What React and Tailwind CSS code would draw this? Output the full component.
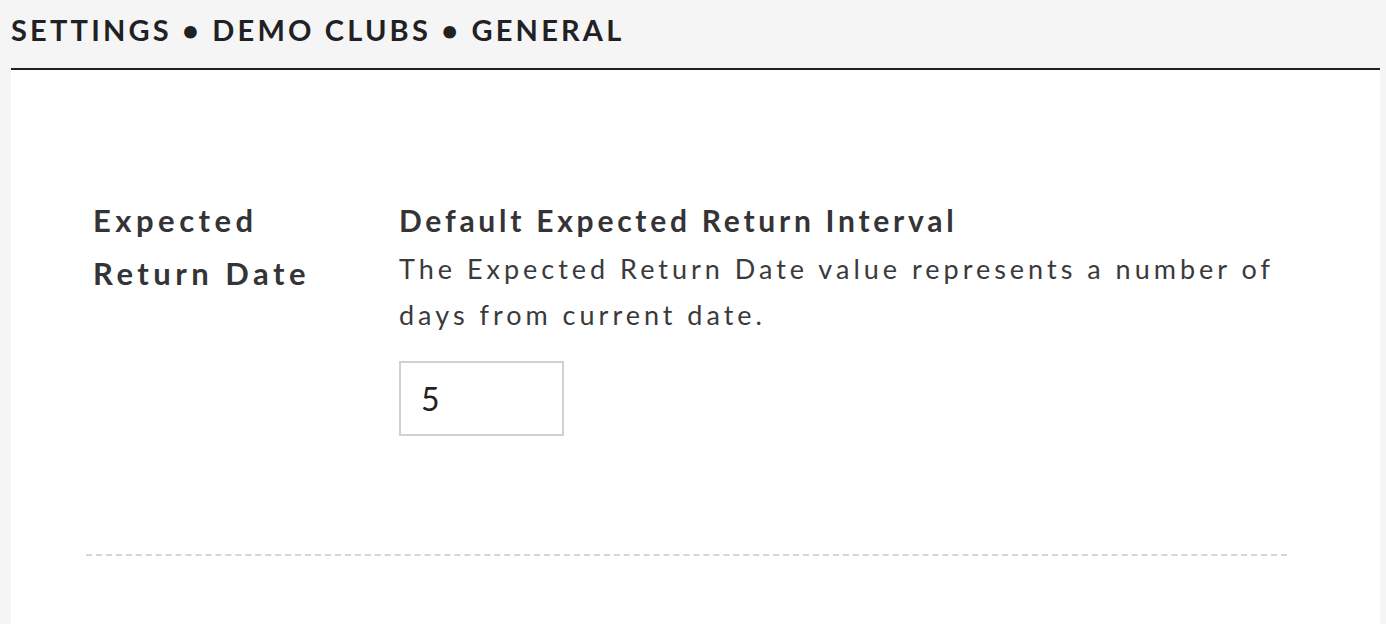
export default function App() {
  return (
    <div className="min-h-screen w-full bg-[#f5f5f5] font-['Lato',sans-serif]" style={{ height: 624 }}>
      <div className="flex h-[68px] items-center pb-[8px] pl-[11px] text-[29px] font-bold uppercase tracking-[0.11em] text-[#1f2124]">
        Settings • Demo Clubs • General
      </div>
      <div className="ml-[11px] mr-[6px] h-[556px] border-t-2 border-[#1f2124] bg-white">
        <div className="ml-[75px] w-[1201px] pt-[124px]">
          <div className="flex pb-[118px]">
            <div className="w-[313px] shrink-0 pl-[7px] text-[31px] font-bold leading-[53px] tracking-[0.145em] text-[#343437]">
              Expected
              <br />
              Return Date
            </div>
            <div className="flex flex-col">
              <div className="mt-[4px] text-[30px] font-bold leading-[44px] tracking-[0.125em] text-[#343437]">
                Default Expected Return Interval
              </div>
              <div className="mt-[4px] w-[900px] text-[27px] leading-[46px] tracking-[0.148em] text-[#3a3a3c]">
                The Expected Return Date value represents a number of days from current date.
              </div>
              <div className="mt-[23px] flex h-[75px] w-[165px] items-center border-2 border-[#cdd2d6] px-[20px] text-[32px] text-[#1f2124]">
                5
              </div>
            </div>
          </div>
          <div className="border-t-2 border-dashed border-[#d6d6d6]" />
        </div>
      </div>
    </div>
  );
}
